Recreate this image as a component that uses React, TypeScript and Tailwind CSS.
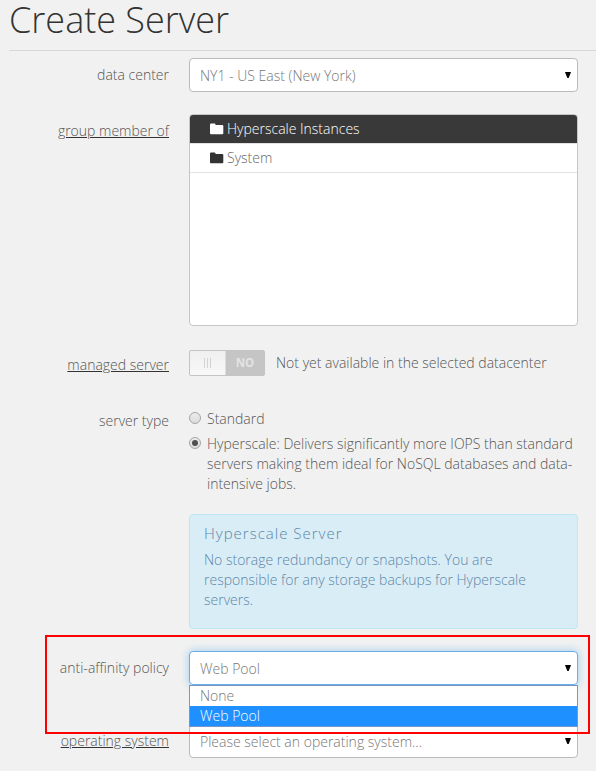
import type { ReactNode } from "react";

function Row({ label, className = "", labelClass = "", children }: { label?: string; className?: string; labelClass?: string; children: ReactNode }) {
  return (
    <div className={`flex ${className}`}>
      <div className={`w-[169px] shrink-0 text-right whitespace-nowrap ${labelClass}`}>{label}</div>
      <div className="ml-5 w-[389px] shrink-0">{children}</div>
    </div>
  );
}

function Arrow() {
  return (
    <svg width="6" height="6" viewBox="0 0 6 6" className="mb-px shrink-0">
      <path d="M0 0H6L3.7 6H2.3Z" fill="#000" />
    </svg>
  );
}

function Select({ text, className = "border-[#bbb]" }: { text: string; className?: string }) {
  return (
    <div className={`flex h-[34px] items-center justify-between rounded-[4px] border bg-white pr-[6px] pl-[10px] text-[#777] ${className}`}>
      <span className="pt-[2px]">{text}</span>
      <Arrow />
    </div>
  );
}

function Folder() {
  return (
    <svg width="14" height="12" viewBox="0 0 14 12" fill="currentColor" className="mr-[3px] shrink-0">
      <path d="M0 1.500Q0 .5 1 .5H4.500Q5.500 .5 5.500 1.500V2H12.300Q13.300 2 13.300 3V10.300Q13.300 11.300 12.300 11.300H1Q0 11.300 0 10.300Z" />
    </svg>
  );
}

function Radio({ checked = false }: { checked?: boolean }) {
  return (
    <span className="mt-[3px] flex size-3 shrink-0 items-center justify-center rounded-full border border-[#a5a5a5] bg-linear-to-b from-[#ececec] to-[#dcdcdc]">
      {checked && <span className="size-[6px] rounded-full bg-[#505050]" />}
    </span>
  );
}

export default function App() {
  return (
    <div className="relative h-[771px] w-[596px] overflow-hidden bg-[#f1f1f1] font-['Open_Sans',sans-serif] text-[14px] leading-5 font-light text-[#555]">
      <h1 className="ml-[9px] h-[51px] border-b border-[#d8d8d8] text-[36px] leading-[40px] font-light text-[#333]">Create Server</h1>

      <Row label="data center" className="mt-[7px] h-14" labelClass="pt-[7px]">
        <Select text="NY1 - US East (New York)" />
      </Row>

      <Row label="group member of" className="h-[236px]" labelClass="pt-[7px] underline decoration-[#333] underline-offset-1">
        <div className="h-[212px] overflow-hidden rounded-[4px] border border-[#c6c6c6] bg-white">
          <div className="flex h-[29px] items-center border-b border-[#e2e2e2] bg-[#393939] pl-5 text-white">
            <Folder />
            <span>Hyperscale Instances</span>
          </div>
          <div className="flex h-[29px] items-center border-b border-[#e2e2e2] pl-5 text-[#333]">
            <Folder />
            <span className="text-[#666]">System</span>
          </div>
        </div>
      </Row>

      <Row label="managed server" className="h-[59px]" labelClass="pt-[5px] underline decoration-[#333] underline-offset-1">
        <div className="flex items-center">
          <div className="flex h-[26px] w-[76px] overflow-hidden rounded-[2px] border border-[#c4c4c4] bg-[#c5c5c5]">
            <div className="flex w-9 items-center justify-center gap-[2px] border-r border-[#ddd] bg-linear-to-b from-[#efefef] to-[#f8f8f8]">
              <span className="h-[10px] w-px bg-[#d3d3d3]" />
              <span className="h-[10px] w-px bg-[#d3d3d3]" />
              <span className="h-[10px] w-px bg-[#d3d3d3]" />
            </div>
            <div className="flex flex-1 items-center justify-center text-[11.5px] font-bold text-[#e3e3e3]">NO</div>
          </div>
          <span className="ml-[11px]">Not yet available in the selected datacenter</span>
        </div>
      </Row>

      <Row label="server type" className="h-[105px]" labelClass="pt-[2px]">
        <div className="flex gap-[6px]">
          <Radio />
          <span>Standard</span>
        </div>
        <div className="mt-[5px] flex gap-[6px]">
          <Radio checked />
          <p>Hyperscale: Delivers significantly more IOPS than standard servers making them ideal for NoSQL databases and data-intensive jobs.</p>
        </div>
      </Row>

      <Row className="h-[137px]">
        <div className="h-[115px] rounded-[4px] border border-[#bce8f1] bg-[#d9edf7] pt-2 pr-[35px] pl-[14px] text-[#5d87a7]">
          <h2 className="mb-[7px] text-[15px] leading-5 font-light tracking-[1px]">Hyperscale Server</h2>
          <p>No storage redundancy or snapshots. You are responsible for any storage backups for Hyperscale servers.</p>
        </div>
      </Row>

      <Row label="anti-affinity policy" className="h-[73px]" labelClass="pt-[7px]">
        <div className="relative">
          <Select text="Web Pool" className="border-[#66afe9] shadow-[0_0_8px_rgba(102,175,233,0.6)]" />
          <div className="absolute top-[34px] left-0 z-10 w-[389px] border border-[#7896c8] bg-white">
            <div className="h-5 pl-[10px] text-[#777]">None</div>
            <div className="h-5 bg-[#1e90ff] pl-[10px] text-white">Web Pool</div>
          </div>
        </div>
      </Row>

      <Row label="operating system" labelClass="pt-[7px] underline decoration-[#333] underline-offset-1">
        <Select text="Please select an operating system..." />
      </Row>

      <div className="absolute top-[635px] left-[45px] z-20 h-[99px] w-[545px] border-2 border-[#f00]" />
    </div>
  );
}
